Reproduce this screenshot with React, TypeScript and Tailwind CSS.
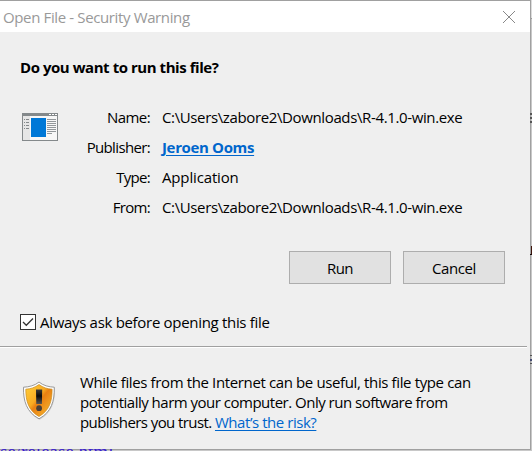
const rows = [
  { label: "Name:", labelCls: "tracking-[-0.6px]", value: "C:\\Users\\zabore2\\Downloads\\R-4.1.0-win.exe", cls: "tracking-[-0.37px]" },
  { label: "Publisher:", labelCls: "tracking-[-0.65px]", value: "Jeroen Ooms", cls: "font-bold text-[#0066cc] underline tracking-[-0.35px] underline-offset-2" },
  { label: "Type:", labelCls: "tracking-[-0.7px]", value: "Application", cls: "tracking-[-0.15px]" },
  { label: "From:", labelCls: "tracking-[-0.7px]", value: "C:\\Users\\zabore2\\Downloads\\R-4.1.0-win.exe", cls: "tracking-[-0.37px]" },
];

function ProgramIcon() {
  return (
    <svg width="36" height="28" viewBox="0 0 36 28" shapeRendering="crispEdges">
      <rect width="36" height="28" fill="#84898b" />
      <rect x="1" y="3" width="34" height="24" fill="#f7f7f7" />
      <rect x="1" y="3" width="7" height="24" fill="#e6e6e6" />
      <rect x="9" y="5" width="15" height="19" fill="#0078d7" />
      <path d="M27 1h2v1h-2zM30 1h2v1h-2zM33 1h2v1h-2z" fill="#fff" />
      <path d="M2 6h1v1h-1zM4 6h3v1h-3zM2 9h1v1h-1zM4 9h3v1h-3zM2 12h1v1h-1zM4 12h3v1h-3zM2 15h1v1h-1zM4 15h3v1h-3z" fill="#84898b" />
      <path d="M25 6h9v1h-9zM25 8h9v1h-9zM25 10h9v1h-9zM25 12h9v1h-9zM25 14h9v1h-9zM25 16h9v1h-9zM25 18h9v1h-9zM25 20h5v1h-5z" fill="#92979a" />
    </svg>
  );
}

function ShieldIcon() {
  return (
    <svg width="34" height="40" viewBox="0 0 34 40">
      <defs>
        <linearGradient id="gold" x1="0" y1="0" x2="1" y2="1">
          <stop offset="0" stopColor="#ffcf3a" />
          <stop offset="0.42" stopColor="#f8ab22" />
          <stop offset="0.52" stopColor="#e87f12" />
          <stop offset="1" stopColor="#fbc034" />
        </linearGradient>
        <linearGradient id="mark" x1="0" y1="0" x2="0" y2="1">
          <stop offset="0" stopColor="#3a3a3a" />
          <stop offset="0.45" stopColor="#0a0a0a" />
          <stop offset="1" stopColor="#555" />
        </linearGradient>
      </defs>
      <path d="M17.500 2C13 5 7 6.800 1.800 7C1.500 21 5 32 17.500 39C30 32 33.500 21 33 7C27 6.800 21.500 5 17.500 2Z" fill="#d4d4d4" />
      <path d="M17 1C13 4.500 7 6 1.500 6.200C1.200 20 4.500 31 17 37.800C29.500 31 32.500 20 32.300 6.200C27 6 21 4.500 17 1Z" fill="#fff" stroke="#8e8e8e" strokeWidth="0.900" />
      <path d="M17 3.500C13 6.500 8.500 8 3.800 8.200C3.700 20 6.500 29.500 17 35.500C27.500 29.500 30.200 20 30.100 8.200C25.500 8 21 6.500 17 3.500Z" fill="url(#gold)" stroke="#c98a1c" strokeWidth="0.700" />
      <path d="M14 8.500h6.200l-0.300 14.500h-5.600z" fill="url(#mark)" />
      <circle cx="17.100" cy="27.200" r="2.900" fill="#4a4038" />
    </svg>
  );
}

export default function App() {
  return (
    <div className="relative h-[451px] w-[532px] overflow-hidden bg-[#c8c8c8] font-['Open_Sans','Noto_Sans',sans-serif] text-[15px] leading-5 text-black">
      <div className="flex h-[450px] w-[531px] flex-col border-t border-r border-b border-[#a0a0a0] bg-[#efefef]">
        <header className="flex h-[31px] shrink-0 items-center justify-between bg-white pr-[15px] pl-[3px] text-[#999]">
          <span className="whitespace-nowrap tracking-[-0.37px]">Open File - Security Warning</span>
          <svg width="12" height="12" viewBox="0 0 12 12" fill="none" stroke="#888">
            <path d="M0 0L12 12M12 0L0 12" />
          </svg>
        </header>
        <h1 className="mt-[25px] pl-5 font-bold tracking-[-0.45px] whitespace-nowrap">Do you want to run this file?</h1>
        <section className="mt-[30px] flex">
          <div className="w-[61px] pt-[6px] pl-[22px]"><ProgramIcon /></div>
          <dl className="flex flex-col gap-[10px]">
            {rows.map((row) => (
              <div key={row.label} className="flex h-5 gap-3 whitespace-nowrap">
                <dt className={`w-[89px] text-right ${row.labelCls}`}>{row.label}</dt>
                <dd className={row.cls}>{row.value}</dd>
              </div>
            ))}
          </dl>
        </section>
        <div className="mt-[34px] flex justify-end gap-3 pr-[25px]">
          <button className="h-[33px] w-[102px] border border-[#adadad] bg-[#e1e1e1] tracking-[-0.6px]">Run</button>
          <button className="h-[33px] w-[102px] border border-[#adadad] bg-[#e1e1e1] tracking-[-0.4px]">Cancel</button>
        </div>
        <label className="mt-[28px] flex h-5 items-center gap-1 pl-5">
          <span className="grid size-4 place-items-center border border-[#333] bg-white">
            <svg width="12" height="12" viewBox="0 0 12 12" fill="none" stroke="#333" strokeWidth="1.300"><path d="M1 6L4.300 9.300L11 2.500" /></svg>
          </span>
          <span className="whitespace-nowrap tracking-[-0.31px]">Always ask before opening this file</span>
        </label>
        <hr className="mt-[14px] mr-[3px] h-[2px] border-t border-b border-t-[#a0a0a0] border-b-white" />
        <footer className="flex pt-[24px] pl-[22px]">
          <div className="w-[58px] pt-[9px]"><ShieldIcon /></div>
          <div className="whitespace-nowrap">
            <p className="tracking-[-0.37px]">While files from the Internet can be useful, this file type can</p>
            <p className="tracking-[-0.5px]">potentially harm your computer. Only run software from</p>
            <p className="tracking-[-0.58px]">publishers you trust. <a className="tracking-[-0.45px] text-[#0066cc] underline underline-offset-2">What’s the risk?</a></p>
          </div>
        </footer>
      </div>

      {/* Page content peeking out from behind the dialog */}
      <div className="absolute top-0 left-[531px] h-[18px] w-px bg-[#dcdcdc]" />
      <div className="absolute top-[18px] left-[531px] h-px w-px bg-[#999]" />
      <div className="absolute top-[113px] left-[530px] flex w-[2px] flex-col gap-[2px]">
        <span className="h-[2px] bg-[#555]" />
        <span className="h-[2px] bg-[#555]" />
        <span className="h-[2px] bg-[#555]" />
      </div>
      <div className="absolute top-[246px] left-[531px] h-[9px] w-px bg-[#3d130a]" />
      <div className="absolute top-[254px] left-[530px] h-px w-[2px] bg-[#1a0a0a]" />
      <div className="absolute top-[355px] left-[530px] flex h-[9px] w-[2px] flex-col justify-between">
        <span className="h-px bg-[#555]" />
        <span className="h-[2px] bg-[#444a70]" />
        <span className="h-px bg-[#555]" />
      </div>
      <div className="absolute top-[449px] left-0 h-[2px] w-[120px] overflow-hidden font-['Liberation_Serif',serif] text-[19px] text-[#3a20d0]">
        <span className="relative -top-[7px] block leading-5 whitespace-nowrap">se/release.html</span>
      </div>
    </div>
  );
}
